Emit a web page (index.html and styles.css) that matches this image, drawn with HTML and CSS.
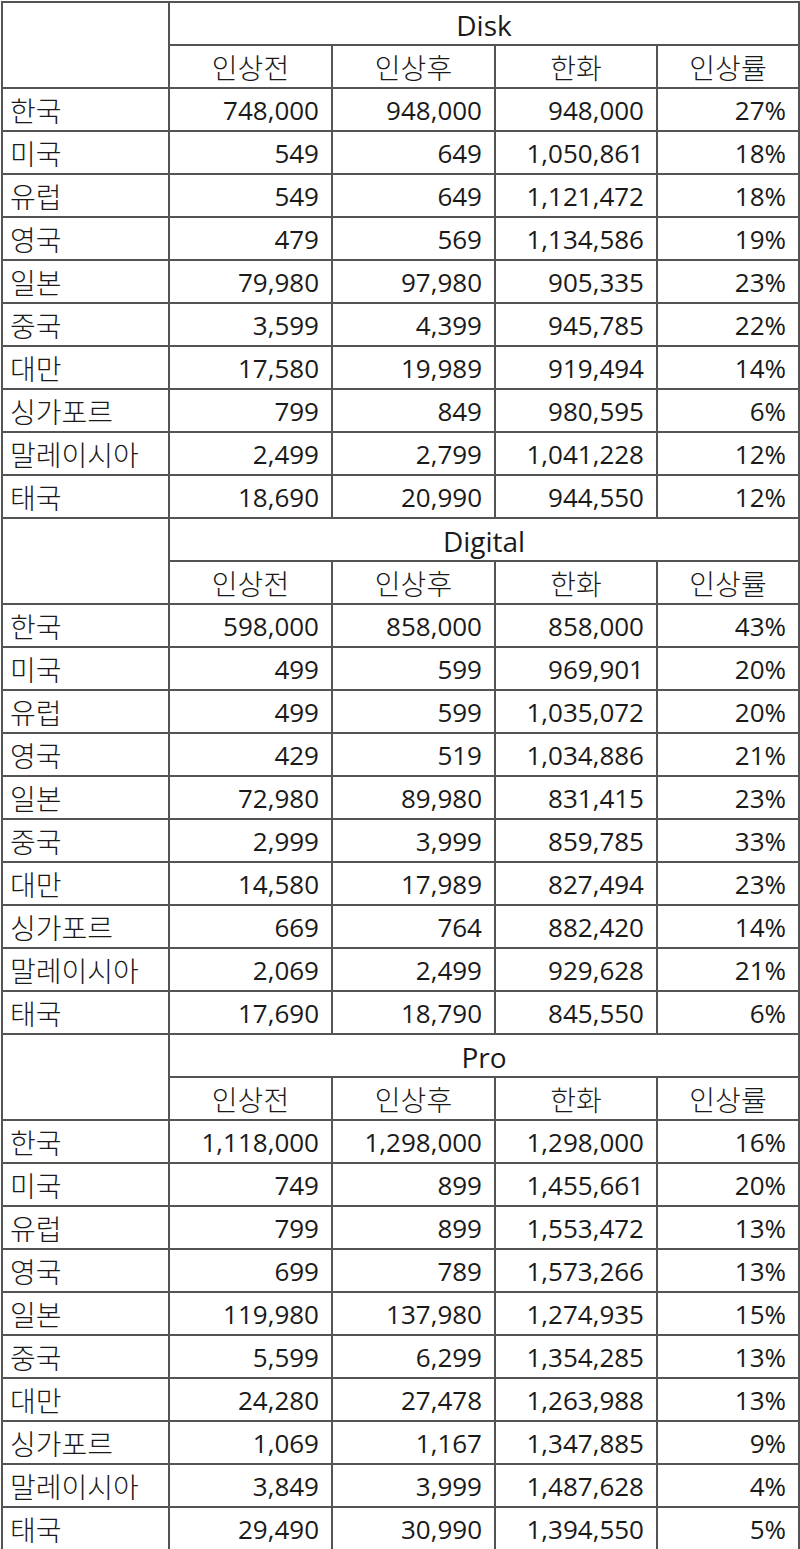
FILE: index.html
```html
<!DOCTYPE html>
<html lang="ko">
<head>
<meta charset="utf-8">
<link rel="stylesheet" href="styles.css">
</head>
<body>
<table class="price-table">
  <colgroup>
    <col class="c-label"><col class="c-num"><col class="c-num"><col class="c-num2"><col class="c-rate">
  </colgroup>
  <tbody>
    <tr><td class="blank" rowspan="2"></td><td class="group" colspan="4">Disk</td></tr>
    <tr><td class="head">인상전</td><td class="head">인상후</td><td class="head">한화</td><td class="head">인상률</td></tr>
    <tr><td class="label">한국</td><td>748,000</td><td>948,000</td><td>948,000</td><td>27%</td></tr>
    <tr><td class="label">미국</td><td>549</td><td>649</td><td>1,050,861</td><td>18%</td></tr>
    <tr><td class="label">유럽</td><td>549</td><td>649</td><td>1,121,472</td><td>18%</td></tr>
    <tr><td class="label">영국</td><td>479</td><td>569</td><td>1,134,586</td><td>19%</td></tr>
    <tr><td class="label">일본</td><td>79,980</td><td>97,980</td><td>905,335</td><td>23%</td></tr>
    <tr><td class="label">중국</td><td>3,599</td><td>4,399</td><td>945,785</td><td>22%</td></tr>
    <tr><td class="label">대만</td><td>17,580</td><td>19,989</td><td>919,494</td><td>14%</td></tr>
    <tr><td class="label">싱가포르</td><td>799</td><td>849</td><td>980,595</td><td>6%</td></tr>
    <tr><td class="label">말레이시아</td><td>2,499</td><td>2,799</td><td>1,041,228</td><td>12%</td></tr>
    <tr><td class="label">태국</td><td>18,690</td><td>20,990</td><td>944,550</td><td>12%</td></tr>

    <tr><td class="blank" rowspan="2"></td><td class="group" colspan="4">Digital</td></tr>
    <tr><td class="head">인상전</td><td class="head">인상후</td><td class="head">한화</td><td class="head">인상률</td></tr>
    <tr><td class="label">한국</td><td>598,000</td><td>858,000</td><td>858,000</td><td>43%</td></tr>
    <tr><td class="label">미국</td><td>499</td><td>599</td><td>969,901</td><td>20%</td></tr>
    <tr><td class="label">유럽</td><td>499</td><td>599</td><td>1,035,072</td><td>20%</td></tr>
    <tr><td class="label">영국</td><td>429</td><td>519</td><td>1,034,886</td><td>21%</td></tr>
    <tr><td class="label">일본</td><td>72,980</td><td>89,980</td><td>831,415</td><td>23%</td></tr>
    <tr><td class="label">중국</td><td>2,999</td><td>3,999</td><td>859,785</td><td>33%</td></tr>
    <tr><td class="label">대만</td><td>14,580</td><td>17,989</td><td>827,494</td><td>23%</td></tr>
    <tr><td class="label">싱가포르</td><td>669</td><td>764</td><td>882,420</td><td>14%</td></tr>
    <tr><td class="label">말레이시아</td><td>2,069</td><td>2,499</td><td>929,628</td><td>21%</td></tr>
    <tr><td class="label">태국</td><td>17,690</td><td>18,790</td><td>845,550</td><td>6%</td></tr>

    <tr><td class="blank" rowspan="2"></td><td class="group" colspan="4">Pro</td></tr>
    <tr><td class="head">인상전</td><td class="head">인상후</td><td class="head">한화</td><td class="head">인상률</td></tr>
    <tr><td class="label">한국</td><td>1,118,000</td><td>1,298,000</td><td>1,298,000</td><td>16%</td></tr>
    <tr><td class="label">미국</td><td>749</td><td>899</td><td>1,455,661</td><td>20%</td></tr>
    <tr><td class="label">유럽</td><td>799</td><td>899</td><td>1,553,472</td><td>13%</td></tr>
    <tr><td class="label">영국</td><td>699</td><td>789</td><td>1,573,266</td><td>13%</td></tr>
    <tr><td class="label">일본</td><td>119,980</td><td>137,980</td><td>1,274,935</td><td>15%</td></tr>
    <tr><td class="label">중국</td><td>5,599</td><td>6,299</td><td>1,354,285</td><td>13%</td></tr>
    <tr><td class="label">대만</td><td>24,280</td><td>27,478</td><td>1,263,988</td><td>13%</td></tr>
    <tr><td class="label">싱가포르</td><td>1,069</td><td>1,167</td><td>1,347,885</td><td>9%</td></tr>
    <tr><td class="label">말레이시아</td><td>3,849</td><td>3,999</td><td>1,487,628</td><td>4%</td></tr>
    <tr><td class="label">태국</td><td>29,490</td><td>30,990</td><td>1,394,550</td><td>5%</td></tr>
  </tbody>
</table>
</body>
</html>
```

FILE: styles.css
```css
html, body {
  margin: 0;
  padding: 0;
  background: #ffffff;
}

body {
  padding: 1px 0 0 1px;
  font-family: "Open Sans", "Noto Sans CJK KR", sans-serif;
  font-size: 26px;
  color: #1a1a1a;
}

.price-table {
  border-collapse: collapse;
  table-layout: fixed;
  width: 797px;
}

.c-label { width: 167px; }
.c-num { width: 163px; }
.c-num2 { width: 162px; }
.c-rate { width: 142px; }

.price-table td {
  border: 2px solid #545454;
  height: 41px;
  padding: 2px 12px 0 7px;
  text-align: right;
  white-space: nowrap;
  line-height: 39px;
  box-sizing: border-box;
}

.price-table td.label {
  text-align: left;
  font-family: "Noto Sans CJK KR", sans-serif;
  font-size: 28px;
  font-weight: 300;
}

.price-table td.head {
  text-align: center;
  padding: 2px 0 0 0;
  font-family: "Noto Sans CJK KR", sans-serif;
  font-size: 28px;
  font-weight: 300;
}

.price-table td.group {
  text-align: center;
  padding: 3px 0 0 0;
  line-height: 38px;
  font-size: 28px;
}
```
